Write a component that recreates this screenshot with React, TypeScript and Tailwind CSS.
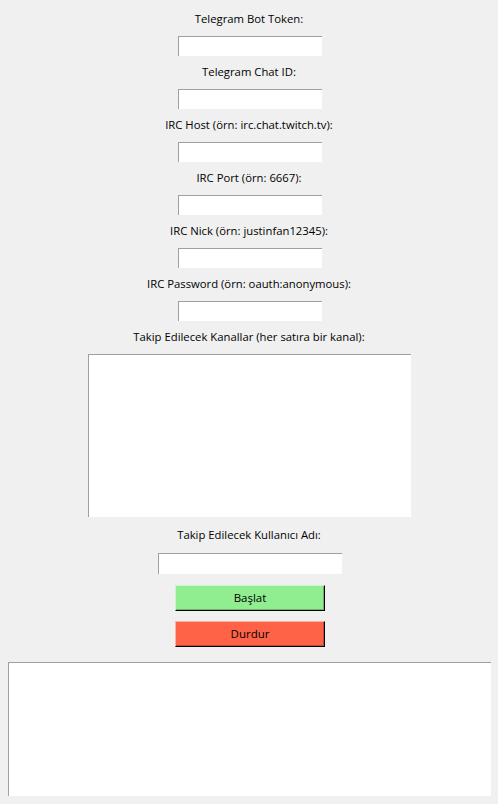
import { useState } from "react";

const fields = [
  "Telegram Bot Token:",
  "Telegram Chat ID:",
  "IRC Host (örn: irc.chat.twitch.tv):",
  "IRC Port (örn: 6667):",
  "IRC Nick (örn: justinfan12345):",
  "IRC Password (örn: oauth:anonymous):",
];

const Label = ({ text, className = "" }: { text: string; className?: string }) => (
  <div className={"h-[17px] leading-[17px] text-[11.3px] text-black text-center " + className}>{text}</div>
);

export default function App() {
  const [log] = useState("");
  return (
    <div
      className="w-[498px] h-[804px] bg-[#f0f0f0] flex flex-col items-center pt-[10px]"
      style={{ fontFamily: '"Open Sans", "Noto Sans", sans-serif' }}
    >
      {fields.map((f, i) => (
        <div key={f} className={"flex flex-col items-center " + (i > 0 ? "mt-[7px]" : "")}>
          <Label text={f} />
          <input
            className="mt-[9px] ml-[2px] w-[144px] h-[20px] bg-white border-t border-l border-[#a0a0a0] outline-none px-1 text-[12px]"
            type="text"
          />
        </div>
      ))}

      <Label text="Takip Edilecek Kanallar (her satıra bir kanal):" className="mt-[7px]" />
      <textarea className="mt-[9px] w-[323px] h-[163px] bg-white border-t border-l border-[#a0a0a0] outline-none resize-none" />

      <Label text="Takip Edilecek Kullanıcı Adı:" className="mt-[9px]" />
      <input
        className="mt-[10px] ml-[2px] w-[184px] h-[21px] bg-white border-t border-l border-[#a0a0a0] outline-none px-1 text-[12px]"
        type="text"
      />

      <button className="mt-[11px] ml-[2px] w-[150px] h-[26px] bg-[#90ee90] text-[11.5px] text-black border-t border-l border-[#c8f6c8] border-b border-r border-b-black border-r-black shadow-[inset_-1px_-1px_0_#6cb36c]">
        Başlat
      </button>
      <button className="mt-[10px] ml-[2px] w-[150px] h-[26px] bg-[#ff6347] text-[11.5px] text-black border-t border-l border-[#ffb1a3] border-b border-r border-b-black border-r-black shadow-[inset_-1px_-1px_0_#bf4a35]">
        Durdur
      </button>

      <div className="self-start ml-[8px] mt-[15px] w-[483px] h-[134px] bg-white border-t border-l border-[#a0a0a0] text-[12px]">
        {log}
      </div>
    </div>
  );
}
